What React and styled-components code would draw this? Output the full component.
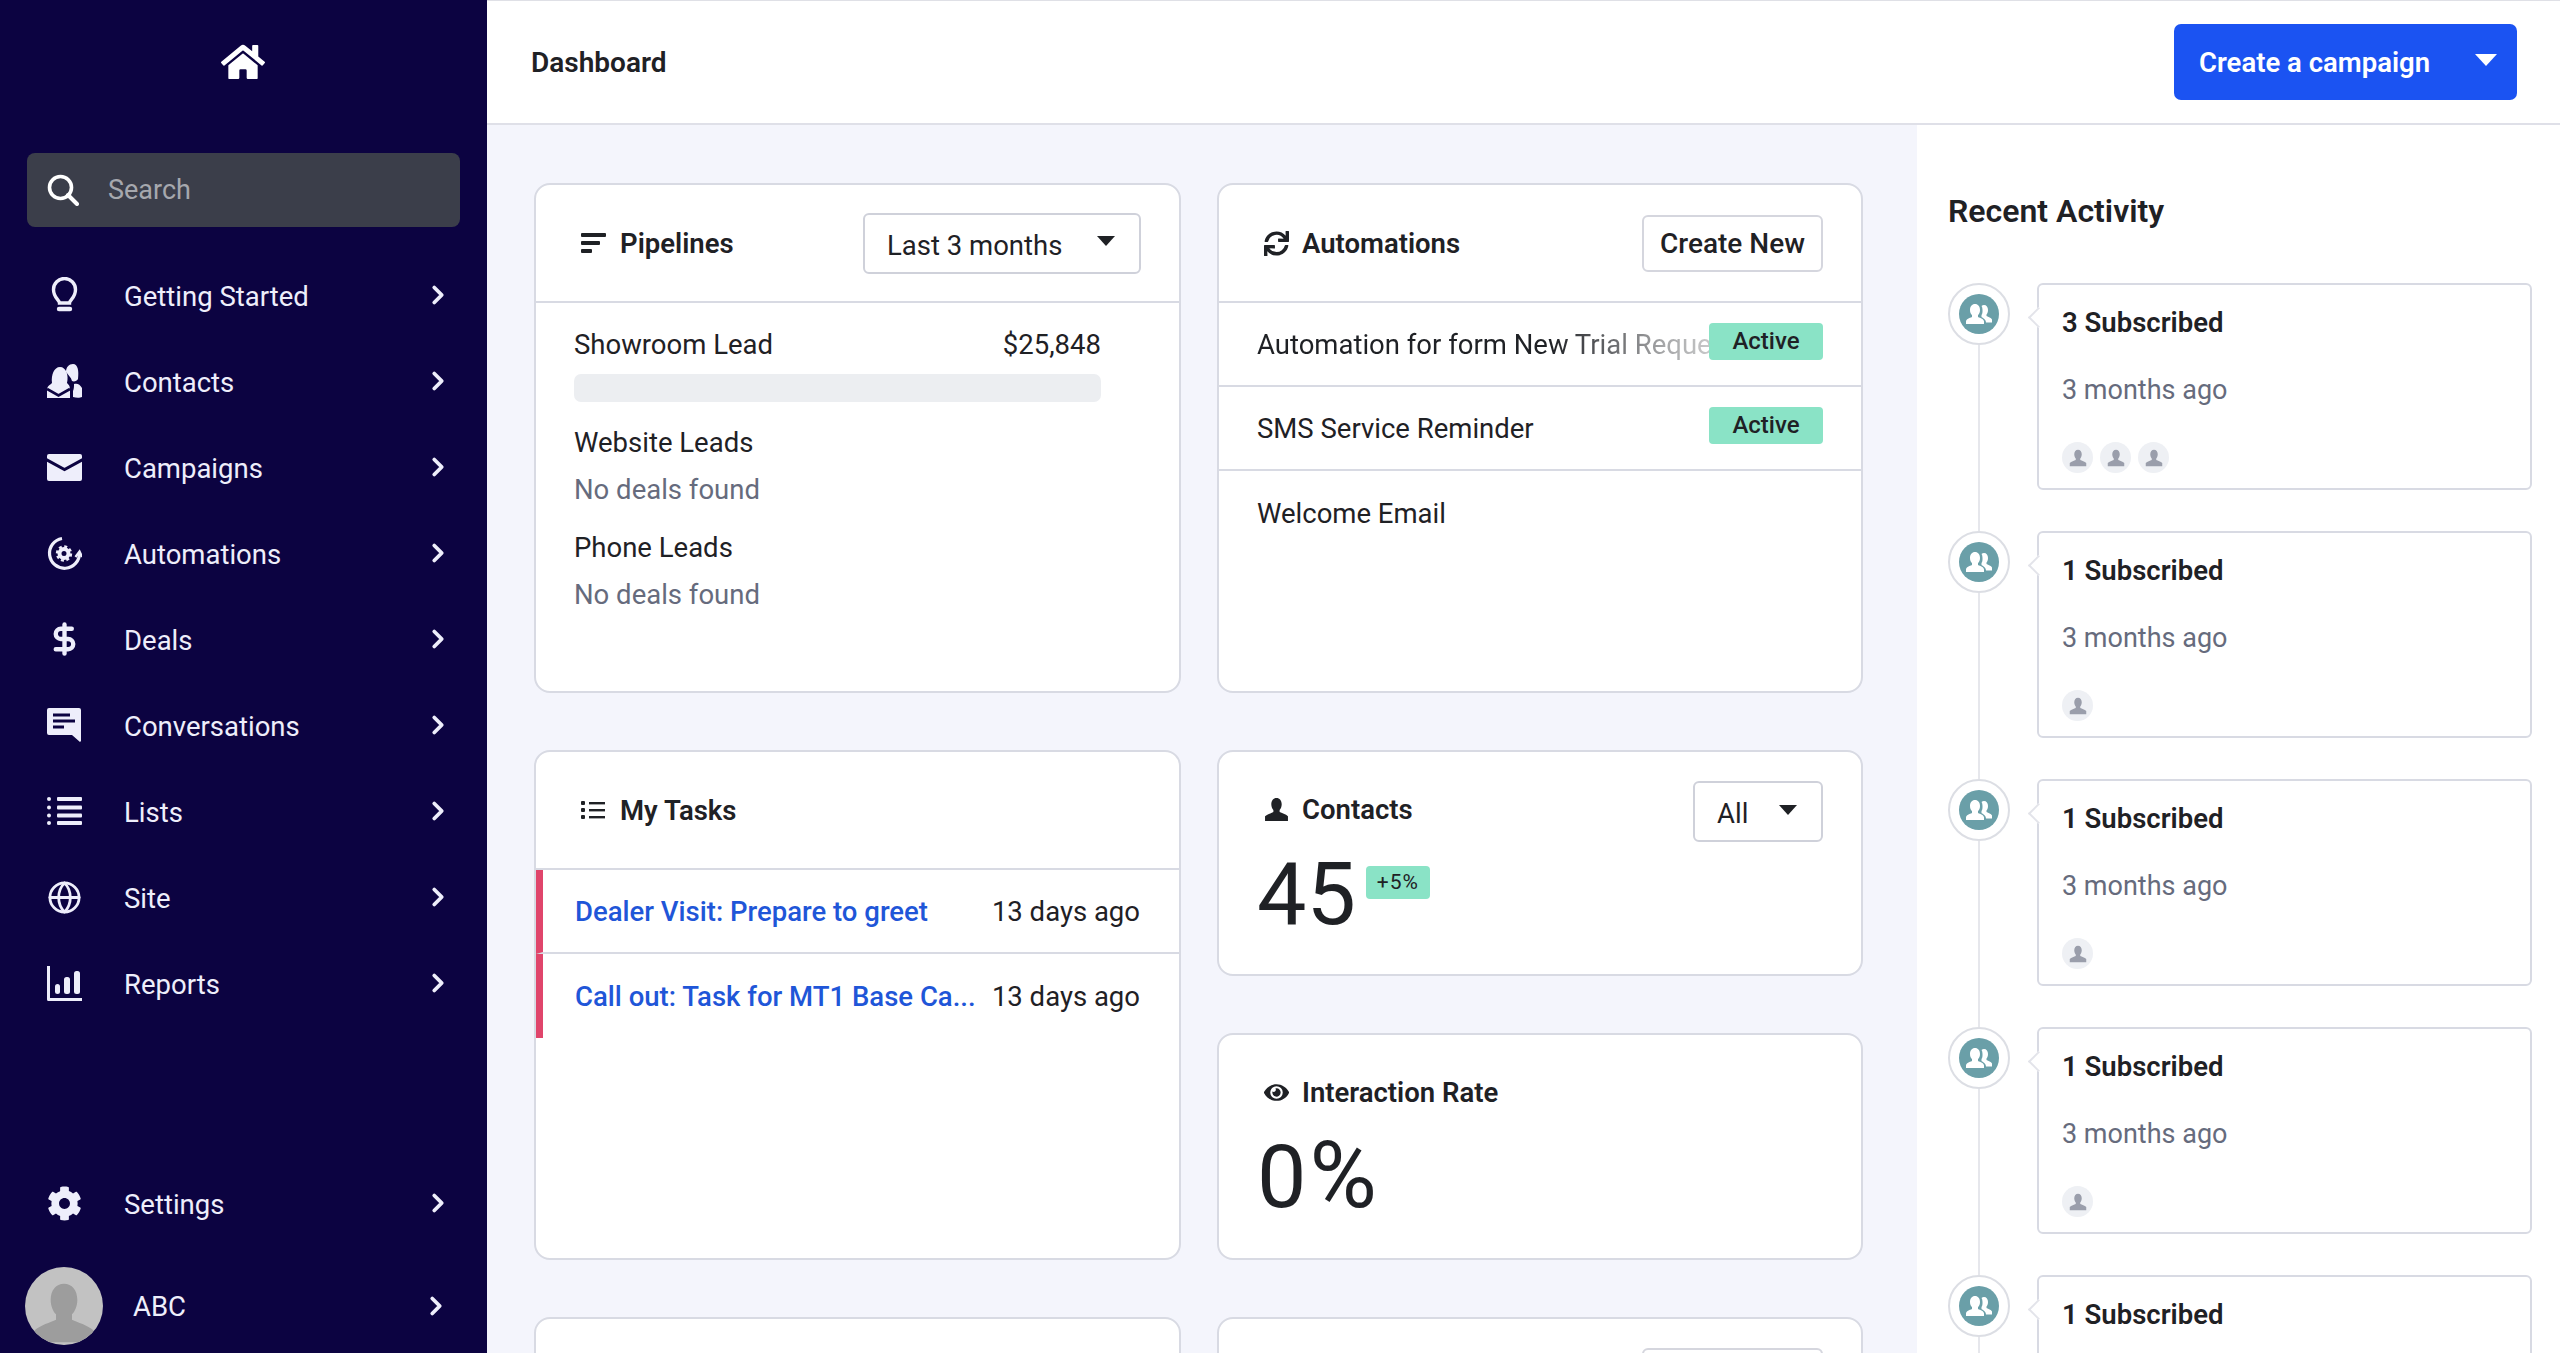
import React from 'react';
import styled, { createGlobalStyle } from 'styled-components';
import { ChevronRight, DollarSign, Globe } from 'lucide-react';
import { FaHome, FaCog, FaSync, FaEye } from 'react-icons/fa';

const GlobalStyle = createGlobalStyle`
  html, body { margin: 0; padding: 0; height: 100%; }
  body { font-family: Roboto, "Noto Sans", sans-serif; color: #1f2125; background: #f4f5fc; }
  * { box-sizing: border-box; }
`;

const NAVY = '#0c0341';
const ICON = '#eeeefb';

const BulbIcon = () => (
  <svg width="35" height="37" viewBox="0 0 35 37" fill="none" stroke={ICON} strokeWidth="3.4">
    <path d="M12.500 26c0-3-6-5-6-13.500a11 11 0 1 1 22 0c0 8.500-6 10.500-6 13.500z" />
    <path d="M12 32h11" strokeWidth="4.400" strokeLinecap="round" />
  </svg>
);

const ContactsIcon = () => (
  <svg width="35" height="35" viewBox="0 0 35 35" fill={ICON}>
    <path d="M0 34v-8c0-4 3-5 5-7C4 11 7 3 13 3s9 8 7 16c2 2 3 3 3 7v8z" />
    <path d="M0 25l11.500 6.500L23 25" fill="none" stroke={NAVY} strokeWidth="2.600" />
    <path d="M19 8c0-5 3-8 7-8 5 0 6 7 5 15-1 2-4 3-6 2-1-4-4-6-6-9z" />
    <path d="M27 20c3-1 6 0 8 4v9c-2 1-6 1-9 0v-6c1-2 1-5 1-7z" />
  </svg>
);

const MailIcon = () => (
  <svg width="35" height="35" viewBox="0 0 35 35">
    <rect y="4" width="35" height="27" rx="2" fill={ICON} />
    <path d="M-1 9.500l18.500 10 18.500-10" fill="none" stroke={NAVY} strokeWidth="3" />
  </svg>
);

const AutomationIcon = () => (
  <svg width="35" height="35" viewBox="0 0 35 35" fill="none" stroke={ICON}>
    <path d="M15 2.500A15 15 0 1 0 32.500 17" strokeWidth="3.200" />
    <path d="M28.500 21l4-5.500 2.500 5.500" strokeWidth="2.400" />
    <circle cx="17" cy="17.500" r="4.500" strokeWidth="4" />
    <circle cx="17" cy="17.500" r="7" strokeWidth="2.400" strokeDasharray="3 2.500" />
  </svg>
);

const ChatIcon = () => (
  <svg width="35" height="35" viewBox="0 0 35 35">
    <path d="M2 0h30a2 2 0 0 1 2 2v31l-1 1-8-7H2a2 2 0 0 1-2-2V2a2 2 0 0 1 2-2z" fill={ICON} />
    <path d="M6 7h17M6 13h22M6 19h11" stroke={NAVY} strokeWidth="3" />
  </svg>
);

const ListIcon = () => (
  <svg width="35" height="35" viewBox="0 0 35 35" fill={ICON}>
    <circle cx="2" cy="5" r="2" /><circle cx="2" cy="13.500" r="2" />
    <circle cx="2" cy="21.500" r="2" /><circle cx="2" cy="29" r="2" />
    <rect x="10" y="3" width="25" height="4" rx="1" /><rect x="10" y="11.500" width="25" height="4" rx="1" />
    <rect x="10" y="19.500" width="25" height="4" rx="1" /><rect x="10" y="27" width="25" height="4" rx="1" />
  </svg>
);

const ChartIcon = () => (
  <svg width="35" height="35" viewBox="0 0 35 35" fill={ICON}>
    <path d="M0 0h3v32h32v3H1.500A1.500 1.500 0 0 1 0 33.500z" />
    <rect x="8" y="18" width="5" height="10" rx="2.500" />
    <rect x="17" y="11" width="6" height="17" rx="2.500" />
    <rect x="27" y="5" width="6" height="23" rx="2.500" />
  </svg>
);

const SearchIcon = () => (
  <svg width="32" height="32" viewBox="0 0 32 32" fill="none" stroke="#fff">
    <circle cx="13.500" cy="13.500" r="11" strokeWidth="3.600" />
    <path d="M21 21l9 9" strokeWidth="4" strokeLinecap="round" />
  </svg>
);

const PipelineIcon = () => (
  <svg width="26" height="22" viewBox="0 0 26 22" fill="#1f2125">
    <rect y="1" width="25" height="4" rx="1" /><rect y="9" width="19" height="4" rx="1" /><rect y="17" width="11" height="4" rx="1" />
  </svg>
);

const TaskIcon = () => (
  <svg width="26" height="22" viewBox="0 0 26 22" fill="#1f2125">
    <rect y="2" width="4" height="4" rx="1" /><rect y="9" width="4" height="4" rx="1" /><rect y="16" width="4" height="4" rx="1" />
    <rect x="8" y="3" width="16" height="2.400" /><rect x="8" y="10" width="16" height="2.400" /><rect x="8" y="17" width="16" height="2.400" />
  </svg>
);

const PersonShape = ({ size, color }) => (
  <svg width={size} height={size} viewBox="0 0 24 24" fill={color}>
    <path d="M12 1c3 0 5 2.500 5 6 0 2.500-1 4.500-2 5.500v2c2 1 6 2 8 4V23H1v-4.500c2-2 6-3 8-4v-2C8 11.500 7 9.500 7 7c0-3.500 2-6 5-6z" />
  </svg>
);

const GroupIcon = () => (
  <svg width="28" height="28" viewBox="0 0 28 28" fill="#fff">
    <path d="M19 5c2.500 0 4 2 4 5 0 2-.7 3.500-1.500 4.500v1.500c2 1 4.500 1.500 5.500 3.500v3h-6c0-3-3-4.500-4.500-5.500v-2c1-1.200 1-3 1-5 0-1.500-.3-3-1-4 .7-.6 1.500-1 2.500-1z" />
    <path d="M10 4c3 0 5 2.500 5 6 0 2.500-.8 4-2 5v2c2.500 1 6 2 6 4.500V24H1v-2.500C1 19 4.500 18 7 17v-2c-1.200-1-2-2.500-2-5 0-3.500 2-6 5-6z" />
  </svg>
);

const NavArrow = () => <ChevronRight size={30} strokeWidth={3} color={ICON} />;

const NAV_ITEMS = [
  { label: 'Getting Started', icon: <BulbIcon /> },
  { label: 'Contacts', icon: <ContactsIcon /> },
  { label: 'Campaigns', icon: <MailIcon /> },
  { label: 'Automations', icon: <AutomationIcon /> },
  { label: 'Deals', icon: <DollarSign size={40} strokeWidth={3} color={ICON} /> },
  { label: 'Conversations', icon: <ChatIcon /> },
  { label: 'Lists', icon: <ListIcon /> },
  { label: 'Site', icon: <Globe size={41} strokeWidth={1.9} color={ICON} /> },
  { label: 'Reports', icon: <ChartIcon /> },
];

const ACTIVITY = [3, 1, 1, 1, 1];

const App = () => (
  <Page>
    <GlobalStyle />
    <Sidebar>
      <Logo><FaHome size={44} color="#fff" /></Logo>
      <SearchBox>
        <SearchIcon />
        <span>Search</span>
      </SearchBox>
      <NavList>
        {NAV_ITEMS.map((item) => (
          <NavRow key={item.label}>
            <NavIcon>{item.icon}</NavIcon>
            <NavLabel>{item.label}</NavLabel>
            <NavArrow />
          </NavRow>
        ))}
      </NavList>
      <NavRow>
        <NavIcon><FaCog size={35} color={ICON} /></NavIcon>
        <NavLabel>Settings</NavLabel>
        <NavArrow />
      </NavRow>
      <ProfileRow>
        <Avatar><PersonShape size={64} color="#9d9d9d" /></Avatar>
        <ProfileName>ABC</ProfileName>
        <NavArrow />
      </ProfileRow>
    </Sidebar>

    <Main>
      <TopBar>
        <PageTitle>Dashboard</PageTitle>
        <PrimaryButton>
          Create a campaign
          <Caret $w={11} $h={12} $color="#fff" />
        </PrimaryButton>
      </TopBar>

      <Body>
        <Content>
          <Card $height={510}>
            <CardHeader $ruled>
              <CardTitle><PipelineIcon />Pipelines</CardTitle>
              <Dropdown $width={278}><DropdownText>Last 3 months</DropdownText><Caret /></Dropdown>
            </CardHeader>
            <PipelineBody>
              <PipelineRow><span>Showroom Lead</span><span>$25,848</span></PipelineRow>
              <ProgressBar />
              <PipelineName>Website Leads</PipelineName>
              <Muted>No deals found</Muted>
              <PipelineName>Phone Leads</PipelineName>
              <Muted>No deals found</Muted>
            </PipelineBody>
          </Card>

          <Card $height={510}>
            <CardHeader $ruled>
              <CardTitle><FaSync size={25} />Automations</CardTitle>
              <OutlineButton>Create New</OutlineButton>
            </CardHeader>
            <AutomationRow $ruled>
              <AutomationName $fade>Automation for form New Trial Request</AutomationName>
              <StatusBadge>Active</StatusBadge>
            </AutomationRow>
            <AutomationRow $ruled>
              <AutomationName>SMS Service Reminder</AutomationName>
              <StatusBadge>Active</StatusBadge>
            </AutomationRow>
            <AutomationRow>
              <AutomationName>Welcome Email</AutomationName>
            </AutomationRow>
          </Card>

          <Card $height={510}>
            <CardHeader $ruled>
              <CardTitle><TaskIcon />My Tasks</CardTitle>
            </CardHeader>
            <TaskRow $ruled>
              <TaskLink>Dealer Visit: Prepare to greet</TaskLink>
              <span>13 days ago</span>
            </TaskRow>
            <TaskRow>
              <TaskLink>Call out: Task for MT1 Base Ca...</TaskLink>
              <span>13 days ago</span>
            </TaskRow>
          </Card>

          <StatColumn>
            <Card $height={226}>
              <StatHeader>
                <CardTitle><PersonShape size={25} color="#1f2125" />Contacts</CardTitle>
                <Dropdown $width={130}><DropdownText>All</DropdownText><Caret /></Dropdown>
              </StatHeader>
              <StatValue>45<ChangeBadge>+5%</ChangeBadge></StatValue>
            </Card>
            <Card $height={227}>
              <StatHeader $plain>
                <CardTitle><FaEye size={25} />Interaction Rate</CardTitle>
              </StatHeader>
              <StatValue>0<Percent>%</Percent></StatValue>
            </Card>
          </StatColumn>

          <Card $height={300} />
          <Card $height={300}>
            <CardHeader $cutoff>
              <span />
              <OutlineButton>Create New</OutlineButton>
            </CardHeader>
          </Card>
        </Content>

        <ActivityPanel>
          <ActivityTitle>Recent Activity</ActivityTitle>
          {ACTIVITY.map((count, i) => (
            <ActivityRow key={i}>
              <Rail>
                <RailDot><TealDot><GroupIcon /></TealDot></RailDot>
                <RailLine />
              </Rail>
              <ActivityCard>
                <ActivityName>{count} Subscribed</ActivityName>
                <ActivityTime>3 months ago</ActivityTime>
                <Faces>
                  {Array.from({ length: count }).map((_, j) => (
                    <Face key={j}><PersonShape size={18} color="#9a9eab" /></Face>
                  ))}
                </Faces>
              </ActivityCard>
            </ActivityRow>
          ))}
        </ActivityPanel>
      </Body>
    </Main>
  </Page>
);

const Page = styled.div`
  display: flex;
  height: 100vh;
  overflow: hidden;
`;

const Sidebar = styled.aside`
  width: 487px;
  flex-shrink: 0;
  display: flex;
  flex-direction: column;
  background: ${NAVY};
  color: ${ICON};
`;

const Logo = styled.div`
  height: 124px;
  display: flex;
  align-items: center;
  justify-content: center;
  padding-right: 2px;
`;

const SearchBox = styled.div`
  display: flex;
  align-items: center;
  gap: 29px;
  height: 74px;
  margin: 29px 27px 25px;
  padding-left: 20px;
  border-radius: 8px;
  background: #3b3e4a;
  color: #a6a8ae;
  font-size: 27px;
`;

const NavList = styled.nav`
  flex: 1;
`;

const NavRow = styled.div`
  display: flex;
  align-items: center;
  height: 86px;
  padding: 0 34px 0 47px;
`;

const NavIcon = styled.span`
  width: 35px;
  height: 40px;
  margin-right: 42px;
  display: flex;
  align-items: center;
  justify-content: center;
`;

const NavLabel = styled.span`
  flex: 1;
  font-size: 27.5px;
  padding-top: 2px;
`;

const ProfileRow = styled.div`
  display: flex;
  align-items: center;
  margin: 21px 0 8px;
  padding: 0 36px 0 25px;
`;

const Avatar = styled.div`
  width: 78px;
  height: 78px;
  border-radius: 50%;
  background: #c2c2c2;
  overflow: hidden;
  display: flex;
  align-items: flex-end;
  justify-content: center;
  margin-right: 30px;
`;

const ProfileName = styled.span`
  flex: 1;
  font-size: 27.5px;
`;

const Main = styled.main`
  flex: 1;
  min-width: 0;
  display: flex;
  flex-direction: column;
`;

const TopBar = styled.header`
  height: 125px;
  flex-shrink: 0;
  display: flex;
  align-items: center;
  justify-content: space-between;
  padding: 0 43px 0 44px;
  background: #fff;
  border-top: 1px solid #dfe0e6;
  border-bottom: 2px solid #dfe0e8;
`;

const PageTitle = styled.h1`
  margin: 0;
  font-size: 28px;
  font-weight: 600;
`;

const PrimaryButton = styled.button`
  width: 343px;
  height: 76px;
  display: flex;
  align-items: center;
  justify-content: space-between;
  padding: 0 20px 0 25px;
  border: none;
  border-radius: 7px;
  background: #1b53f2;
  color: #fff;
  font: 600 27.5px Roboto, sans-serif;
`;

const Caret = styled.span`
  width: 0;
  height: 0;
  border-left: ${(p) => p.$w || 9}px solid transparent;
  border-right: ${(p) => p.$w || 9}px solid transparent;
  border-top: ${(p) => p.$h || 10}px solid ${(p) => p.$color || '#1f2125'};
  margin-bottom: 4px;
`;

const Body = styled.div`
  flex: 1;
  min-height: 0;
  display: flex;
`;

const Content = styled.section`
  width: 1430px;
  flex-shrink: 0;
  display: grid;
  grid-template-columns: 647px 646px;
  column-gap: 36px;
  row-gap: 57px;
  align-content: start;
  padding: 58px 0 0 47px;
  background: #f4f5fc;
`;

const Card = styled.div`
  height: ${(p) => p.$height}px;
  background: #fff;
  border: 2px solid #d8dae3;
  border-radius: 16px;
  overflow: hidden;
`;

const CardHeader = styled.div`
  height: ${(p) => (p.$cutoff ? 'auto' : '118px')};
  display: flex;
  align-items: ${(p) => (p.$cutoff ? 'flex-start' : 'center')};
  justify-content: space-between;
  padding: ${(p) => (p.$cutoff ? '29px 38px 0 45px' : '0 38px 0 45px')};
  border-bottom: ${(p) => (p.$ruled ? '2px solid #d8dae3' : 'none')};
`;

const CardTitle = styled.h2`
  margin: 0;
  display: flex;
  align-items: center;
  gap: 13px;
  font-size: 27.5px;
  font-weight: 600;
`;

const Dropdown = styled.button`
  width: ${(p) => p.$width}px;
  height: 61px;
  display: flex;
  align-items: center;
  justify-content: space-between;
  padding: 0 24px 0 22px;
  background: #fff;
  border: 2px solid #cfd1da;
  border-radius: 6px;
  color: #1f2125;
  font: 400 27.5px Roboto, sans-serif;
`;

const DropdownText = styled.span`
  padding-top: 4px;
`;

const OutlineButton = styled.button`
  width: 181px;
  height: 57px;
  background: #fff;
  border: 2px solid #d5d6de;
  border-radius: 6px;
  color: #1f2125;
  font: 500 28px Roboto, sans-serif;
`;

const PipelineBody = styled.div`
  padding: 24px 78px 0 38px;
  font-size: 27.5px;
`;

const PipelineRow = styled.div`
  display: flex;
  justify-content: space-between;
  line-height: 36px;
`;

const ProgressBar = styled.div`
  height: 28px;
  margin: 11px 0 23px;
  border-radius: 7px;
  background: #eceef1;
`;

const PipelineName = styled.div`
  line-height: 36px;
  margin-bottom: 11px;
`;

const Muted = styled.div`
  line-height: 36px;
  margin-bottom: 22px;
  color: #666b7d;
`;

const AutomationRow = styled.div`
  height: 84px;
  display: flex;
  align-items: center;
  padding: 0 38px;
  border-bottom: ${(p) => (p.$ruled ? '2px solid #d8dae3' : 'none')};
`;

const AutomationName = styled.span`
  flex: 1;
  min-width: 0;
  font-size: 27.5px;
  white-space: nowrap;
  overflow: hidden;
  ${(p) => p.$fade && 'mask-image: linear-gradient(to right, #000 65%, rgba(0, 0, 0, 0.4) 90%, rgba(0, 0, 0, 0.25));'}
`;

const StatusBadge = styled.span`
  width: 114px;
  height: 37px;
  flex-shrink: 0;
  margin-top: -6px;
  display: flex;
  align-items: center;
  justify-content: center;
  border-radius: 4px;
  background: #8ae3c6;
  font-size: 24px;
  font-weight: 500;
`;

const TaskRow = styled.div`
  height: 84px;
  display: flex;
  align-items: center;
  justify-content: space-between;
  padding: 0 39px 0 32px;
  border-left: 7px solid #e0456b;
  border-bottom: ${(p) => (p.$ruled ? '2px solid #d8dae3' : 'none')};
  font-size: 27.5px;
`;

const TaskLink = styled.a`
  color: #1f56d8;
  font-weight: 500;
  white-space: nowrap;
`;

const StatColumn = styled.div`
  display: flex;
  flex-direction: column;
  gap: 57px;
`;

const StatHeader = styled.div`
  display: flex;
  align-items: flex-start;
  justify-content: space-between;
  padding: ${(p) => (p.$plain ? '41px' : '29px')} 38px 0 45px;
  height: ${(p) => (p.$plain ? '91px' : '92px')};

  h2 {
    margin-top: ${(p) => (p.$plain ? '0' : '12px')};
  }
`;

const StatValue = styled.div`
  display: flex;
  align-items: baseline;
  padding-left: 38px;
  font-size: 88px;
  line-height: 100px;
`;

const Percent = styled.span`
  margin-left: 3px;
  font-size: 92px;
`;

const ChangeBadge = styled.span`
  width: 64px;
  height: 33px;
  align-self: flex-start;
  margin: 22px 0 0 10px;
  display: flex;
  align-items: center;
  justify-content: center;
  border-radius: 4px;
  background: #8ae3c6;
  font-size: 21px;
  line-height: 1;
  letter-spacing: 1px;
`;

const ActivityPanel = styled.aside`
  flex: 1;
  min-width: 0;
  padding: 67px 28px 0 31px;
  background: #fff;
`;

const ActivityTitle = styled.h2`
  margin: 0 0 53px;
  font-size: 32px;
  font-weight: 600;
  line-height: 38px;
`;

const ActivityRow = styled.div`
  display: flex;
  gap: 27px;
  padding-bottom: 41px;
`;

const Rail = styled.div`
  width: 62px;
  flex-shrink: 0;
  margin-bottom: -41px;
  display: flex;
  flex-direction: column;
  align-items: center;
`;

const RailDot = styled.div`
  width: 62px;
  height: 62px;
  flex-shrink: 0;
  display: flex;
  align-items: center;
  justify-content: center;
  border: 2px solid #dcdee4;
  border-radius: 50%;
`;

const TealDot = styled.div`
  width: 40px;
  height: 40px;
  display: flex;
  align-items: center;
  justify-content: center;
  border-radius: 50%;
  background: #6a9fa8;
`;

const RailLine = styled.div`
  flex: 1;
  width: 2px;
  background: #e6e7ec;
`;

const ActivityCard = styled.div`
  position: relative;
  flex: 1;
  height: 207px;
  padding: 21px 23px 0;
  border: 2px solid #d8dae3;
  border-radius: 6px;
  background: #fff;

  &::before {
    content: '';
    position: absolute;
    left: -8px;
    top: 25px;
    width: 13px;
    height: 13px;
    background: #fff;
    border-left: 2px solid #e3e4ea;
    border-bottom: 2px solid #e3e4ea;
    transform: rotate(45deg);
  }
`;

const ActivityName = styled.div`
  font-size: 27.5px;
  font-weight: 600;
  line-height: 34px;
`;

const ActivityTime = styled.div`
  margin-top: 33px;
  font-size: 27px;
  line-height: 34px;
  color: #666b7d;
`;

const Faces = styled.div`
  display: flex;
  gap: 7px;
  margin-top: 35px;
`;

const Face = styled.div`
  width: 31px;
  height: 31px;
  display: flex;
  align-items: center;
  justify-content: center;
  border-radius: 50%;
  background: #eef0f4;
`;

export default App;
